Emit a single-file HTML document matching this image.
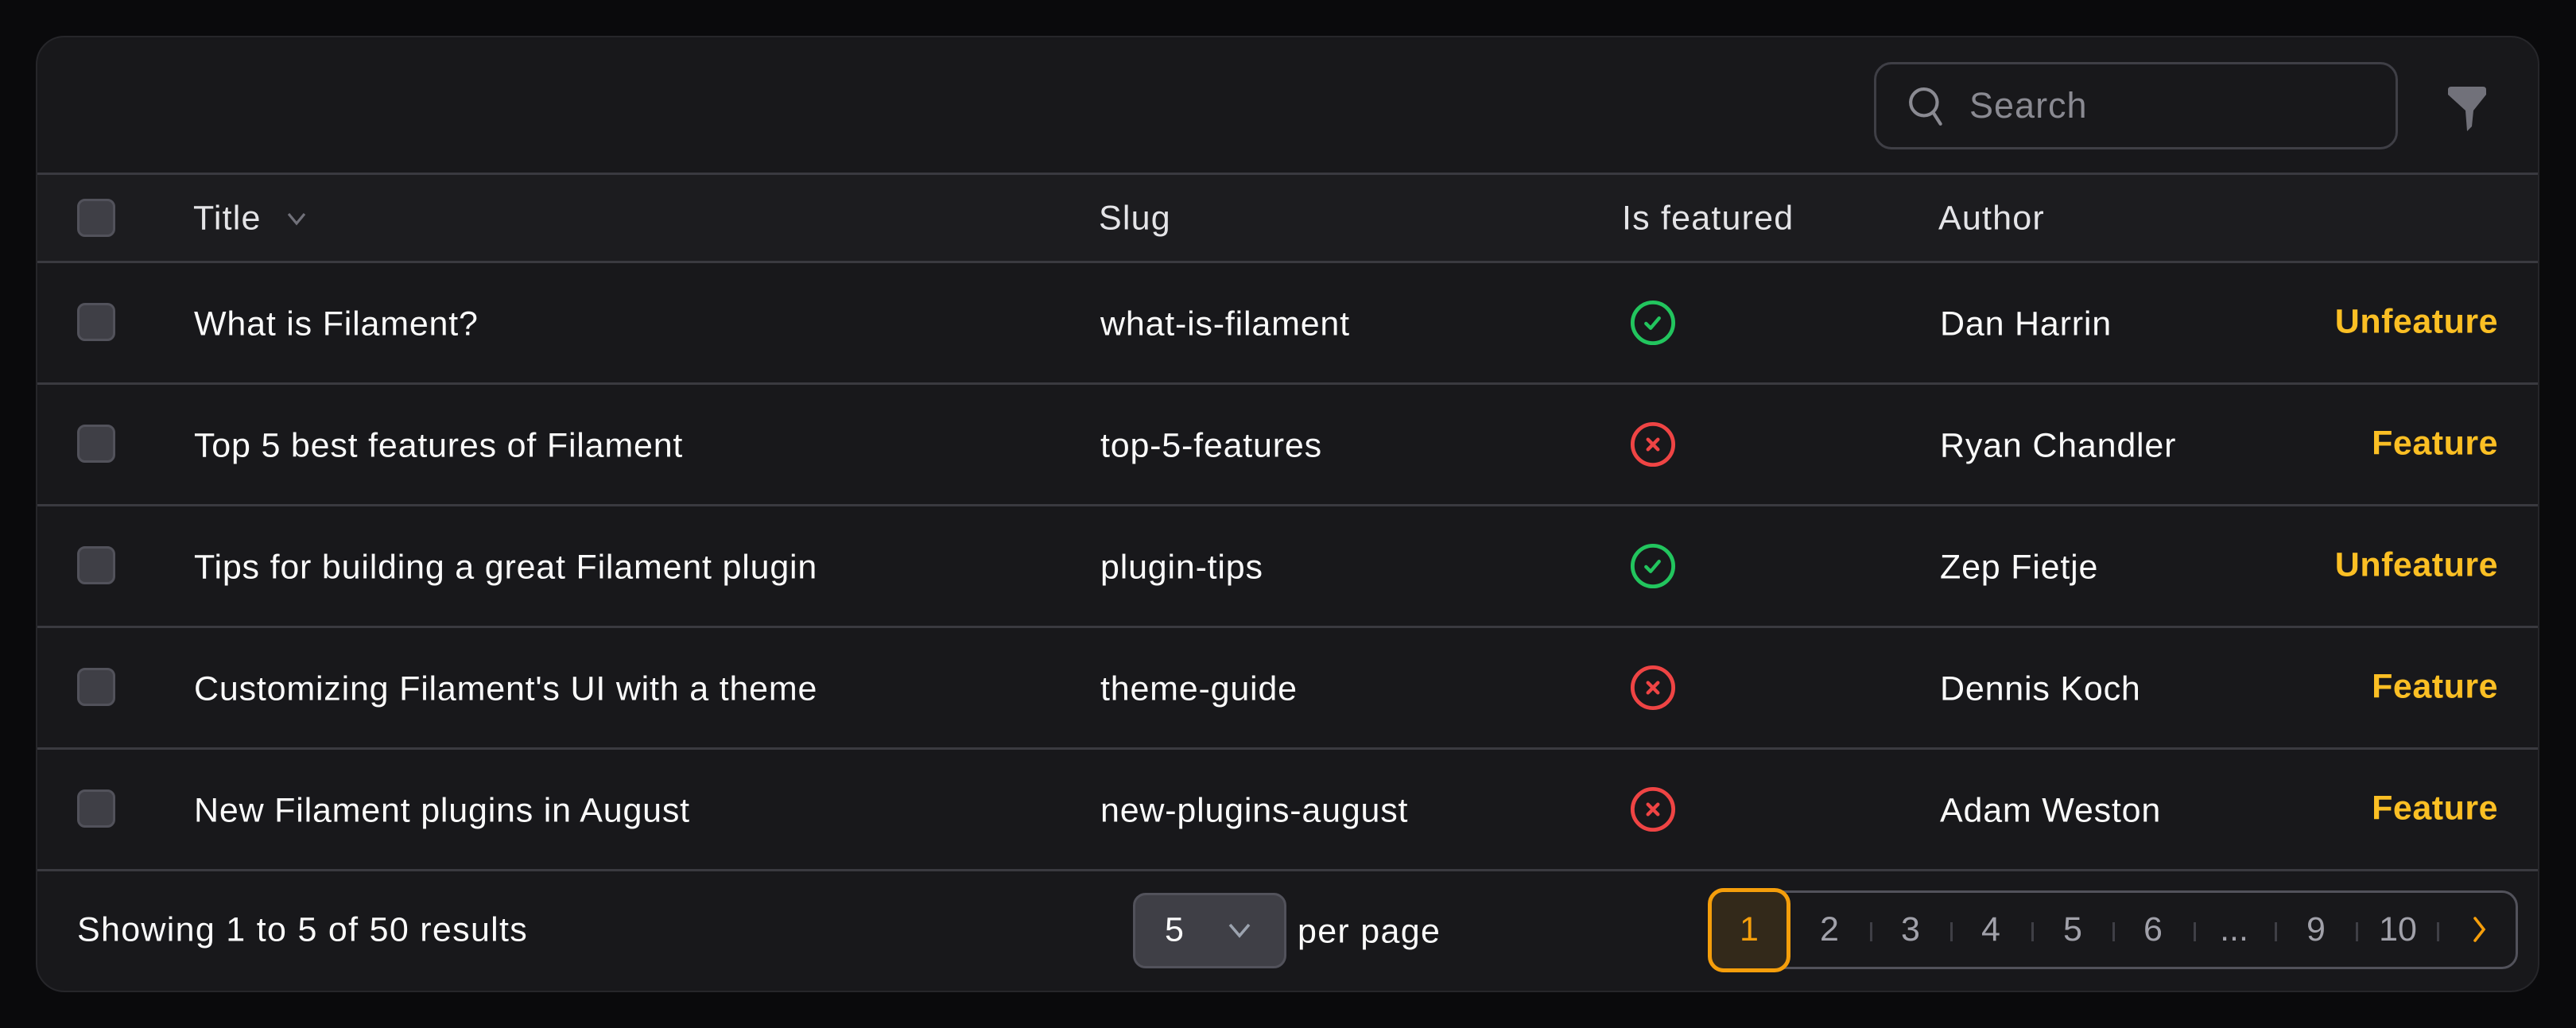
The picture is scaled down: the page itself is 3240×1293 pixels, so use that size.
<!DOCTYPE html>
<html><head><meta charset="utf-8"><style>
*{box-sizing:border-box;margin:0;padding:0}
body{width:3240px;height:1293px;background:#0a0a0c;font-family:"Liberation Sans",sans-serif;color:#fafafa;position:relative;overflow:hidden}
.card{position:absolute;left:45px;top:45px;width:3149px;height:1203px;background:#18181b;border:2px solid #26262a;border-radius:36px;overflow:hidden}
.abs{position:absolute}
.line{position:absolute;left:0;right:0;height:3px;background:#3a3a40}
.cb{position:absolute;left:50px;width:48px;height:48px;border-radius:10px;background:#3f3f46;border:3px solid #52525b}
.t{position:absolute;font-size:43px;letter-spacing:0.8px;white-space:nowrap;transform:translateY(-50%)}
.h{color:#e4e4e7;font-weight:500;letter-spacing:1.2px}
.act{color:#fbbf24;font-weight:600;right:50px;letter-spacing:0.5px}
.pg{position:absolute;top:1075px;height:100px;font-size:43px;color:#a1a1aa;line-height:100px;transform:translateX(-50%)}
.sep{position:absolute;top:1113px;width:3px;height:24px;background:#3f3f46}
</style></head><body>
<div class="card">
 <div class="abs" style="left:2310px;top:31px;width:659px;height:110px;border:3px solid #3f3f46;border-radius:22px;background:#18181b"></div>
 <svg class="abs" style="left:2352px;top:60px" width="50" height="56" viewBox="0 0 24 26"><circle cx="10" cy="10" r="8" fill="none" stroke="#8a8a92" stroke-width="2"/><path d="M15.5 16 L20 23" stroke="#8a8a92" stroke-width="2" stroke-linecap="round"/></svg>
 <div class="t" style="left:2430px;top:86px;color:#8a8a92;font-size:45px;letter-spacing:1px">Search</div>
 <svg class="abs" style="left:3030px;top:62px" width="52" height="56" viewBox="0 0 26 28"><path d="M1 2 Q1 0 3 0 L23 0 Q25 0 25 2 L25 5 L17 15 L16 25 L13 28 L12 15 L1 5 Z" fill="#71717a"/></svg>
 <div class="line" style="top:170px"></div>
 <div class="abs" style="left:0;right:0;top:173px;height:108px;background:#1c1c1f"></div>
 <div class="cb" style="top:203px"></div>
 <div class="t h" style="left:196px;top:228px">Title</div>
 <svg class="abs" style="left:312px;top:218px" width="28" height="20" viewBox="0 0 14 10"><path d="M2 2 L7 8 L12 2" fill="none" stroke="#71717a" stroke-width="1.6"/></svg>
 <div class="t h" style="left:1335px;top:228px">Slug</div>
 <div class="t h" style="left:1993px;top:228px">Is featured</div>
 <div class="t h" style="left:2391px;top:228px">Author</div>
 <div class="line" style="top:281px"></div>

 <div class="cb" style="top:334px"></div>
 <div class="t" style="left:197px;top:361px">What is Filament?</div>
 <div class="t" style="left:1337px;top:361px">what-is-filament</div>
 <svg class="abs" style="left:2003px;top:330px" width="58" height="58" viewBox="0 0 60 60"><circle cx="30" cy="30" r="26.5" fill="none" stroke="#22c55e" stroke-width="5"/><path d="M21 31 L27 37 L38 24" fill="none" stroke="#22c55e" stroke-width="4.5" stroke-linecap="round" stroke-linejoin="round"/></svg>
 <div class="t" style="left:2393px;top:361px">Dan Harrin</div>
 <div class="t act" style="top:358px">Unfeature</div>
 <div class="line" style="top:434px"></div>

 <div class="cb" style="top:487px"></div>
 <div class="t" style="left:197px;top:514px">Top 5 best features of Filament</div>
 <div class="t" style="left:1337px;top:514px">top-5-features</div>
 <svg class="abs" style="left:2003px;top:483px" width="58" height="58" viewBox="0 0 60 60"><circle cx="30" cy="30" r="26.5" fill="none" stroke="#ef4444" stroke-width="5"/><path d="M23.5 23.5 L36.5 36.5 M36.5 23.5 L23.5 36.5" stroke="#ef4444" stroke-width="4.5" stroke-linecap="round"/></svg>
 <div class="t" style="left:2393px;top:514px">Ryan Chandler</div>
 <div class="t act" style="top:511px">Feature</div>
 <div class="line" style="top:587px"></div>

 <div class="cb" style="top:640px"></div>
 <div class="t" style="left:197px;top:667px">Tips for building a great Filament plugin</div>
 <div class="t" style="left:1337px;top:667px">plugin-tips</div>
 <svg class="abs" style="left:2003px;top:636px" width="58" height="58" viewBox="0 0 60 60"><circle cx="30" cy="30" r="26.5" fill="none" stroke="#22c55e" stroke-width="5"/><path d="M21 31 L27 37 L38 24" fill="none" stroke="#22c55e" stroke-width="4.5" stroke-linecap="round" stroke-linejoin="round"/></svg>
 <div class="t" style="left:2393px;top:667px">Zep Fietje</div>
 <div class="t act" style="top:664px">Unfeature</div>
 <div class="line" style="top:740px"></div>

 <div class="cb" style="top:793px"></div>
 <div class="t" style="left:197px;top:820px">Customizing Filament's UI with a theme</div>
 <div class="t" style="left:1337px;top:820px">theme-guide</div>
 <svg class="abs" style="left:2003px;top:789px" width="58" height="58" viewBox="0 0 60 60"><circle cx="30" cy="30" r="26.5" fill="none" stroke="#ef4444" stroke-width="5"/><path d="M23.5 23.5 L36.5 36.5 M36.5 23.5 L23.5 36.5" stroke="#ef4444" stroke-width="4.5" stroke-linecap="round"/></svg>
 <div class="t" style="left:2393px;top:820px">Dennis Koch</div>
 <div class="t act" style="top:817px">Feature</div>
 <div class="line" style="top:893px"></div>

 <div class="cb" style="top:946px"></div>
 <div class="t" style="left:197px;top:973px">New Filament plugins in August</div>
 <div class="t" style="left:1337px;top:973px">new-plugins-august</div>
 <svg class="abs" style="left:2003px;top:942px" width="58" height="58" viewBox="0 0 60 60"><circle cx="30" cy="30" r="26.5" fill="none" stroke="#ef4444" stroke-width="5"/><path d="M23.5 23.5 L36.5 36.5 M36.5 23.5 L23.5 36.5" stroke="#ef4444" stroke-width="4.5" stroke-linecap="round"/></svg>
 <div class="t" style="left:2393px;top:973px">Adam Weston</div>
 <div class="t act" style="top:970px">Feature</div>
 <div class="line" style="top:1046px"></div>

 <div class="t" style="left:50px;top:1123px;font-weight:500;letter-spacing:1.3px">Showing 1 to 5 of 50 results</div>
 <div class="abs" style="left:1378px;top:1076px;width:193px;height:95px;background:#3f3f46;border:3px solid #52525b;border-radius:16px"></div>
 <div class="t" style="left:1418px;top:1123px">5</div>
 <svg class="abs" style="left:1496px;top:1112px" width="32" height="22" viewBox="0 0 16 11"><path d="M2 2 L8 9 L14 2" fill="none" stroke="#9ca3af" stroke-width="1.8"/></svg>
 <div class="t" style="left:1585px;top:1125px;font-weight:500;letter-spacing:1.3px">per page</div>

 <div class="abs" style="left:2103px;top:1073px;width:1017px;height:99px;border:3px solid #52525b;border-radius:20px"></div>
 <div class="abs" style="left:2101px;top:1070px;width:104px;height:106px;border:5px solid #f59e0b;border-radius:20px;background:#33291a"></div>
 <div class="pg" style="left:2153px;color:#f59e0b;top:1072px">1</div>
 <div class="pg" style="left:2254px;top:1072px">2</div>
 <div class="pg" style="left:2356px;top:1072px">3</div>
 <div class="pg" style="left:2457px;top:1072px">4</div>
 <div class="pg" style="left:2560px;top:1072px">5</div>
 <div class="pg" style="left:2661px;top:1072px">6</div>
 <div class="pg" style="left:2763px;top:1072px">...</div>
 <div class="pg" style="left:2866px;top:1072px">9</div>
 <div class="pg" style="left:2969px;top:1072px">10</div>
 <svg class="abs" style="left:3062px;top:1104px" width="18" height="36" viewBox="0 0 9 18"><path d="M2 2 L7.5 9 L2 16" fill="none" stroke="#f59e0b" stroke-width="1.8" stroke-linecap="round"/></svg>
 <div class="sep" style="left:2305px"></div>
 <div class="sep" style="left:2406px"></div>
 <div class="sep" style="left:2508px"></div>
 <div class="sep" style="left:2610px"></div>
 <div class="sep" style="left:2712px"></div>
 <div class="sep" style="left:2814px"></div>
 <div class="sep" style="left:2916px"></div>
 <div class="sep" style="left:3018px"></div>
</div>
</body></html>
